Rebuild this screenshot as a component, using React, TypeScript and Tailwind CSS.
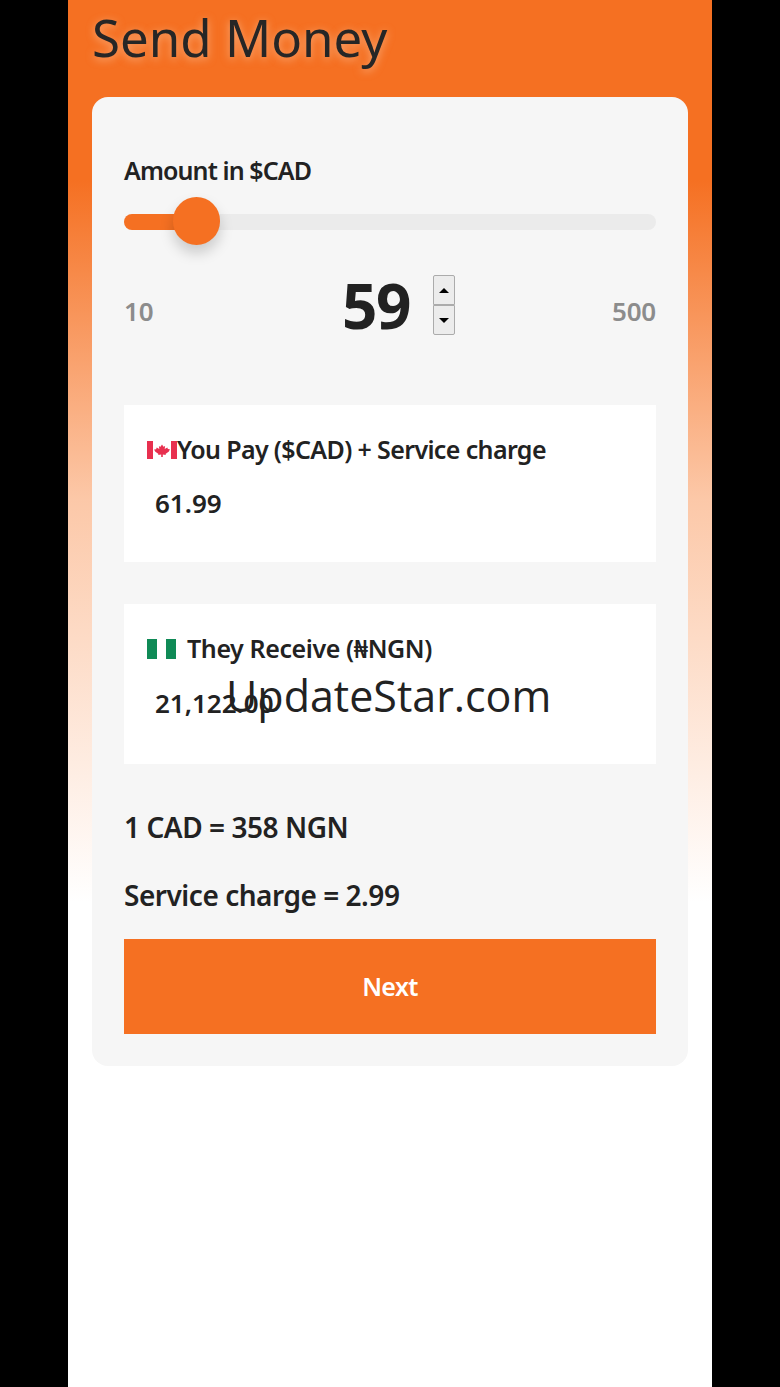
const display = "font-['Noto_Sans','Open_Sans',sans-serif]";

const CanadaFlag = () => (
  <svg width="30" height="18" viewBox="0 0 30 18" className="shrink-0">
    <rect x="0" y="0" width="6" height="18" fill="#e8304f" />
    <rect x="24" y="0" width="6" height="18" fill="#e8304f" />
    <path d="M15 3.5l1.5 2.2 1.6-.6-.4 2.8 2.6-1.4.6 1.6 2 .2-1 2.2-3.4 2.4.4 1-3.1-.4V16h-1.6v-2.4l-3.1.4.4-1-3.4-2.4-1-2.2 2-.2.6-1.6 2.6 1.4-.4-2.8 1.6.6z" fill="#e8304f" />
  </svg>
);

const NigeriaFlag = () => (
  <svg width="29" height="20" viewBox="0 0 29 20" className="shrink-0">
    <rect width="29" height="20" fill="#ffffff" />
    <rect width="10" height="20" fill="#0f8a56" />
    <rect x="19" width="10" height="20" fill="#0f8a56" />
  </svg>
);

const App = () => {
  return (
    <div className="flex h-[1387px] justify-center overflow-hidden bg-black">
      <div className="relative h-full w-[644px] bg-[linear-gradient(to_bottom,#f57022_0%,#f57022_13%,#fcc8a8_36%,#ffffff_65%)] px-6">
        <h1 className={`${display} h-[97px] pt-[1px] text-[51px] leading-[72px] font-normal text-[#262626] [text-shadow:0_2px_8px_rgba(255,225,200,0.55)]`}>
          Send Money
        </h1>

        <div className={`${display} h-[969px] rounded-[16px] bg-[#f6f6f6] px-8 pt-[56px] text-[#222222]`}>
          <label className="block text-[25px] leading-[34px] font-semibold tracking-[-0.9px]">Amount in $CAD</label>

          <div className="relative mt-[27px] h-4 rounded-full bg-[#ebebeb]">
            <div className="h-4 w-[72px] rounded-full bg-[#f57022]" />
            <div className="absolute top-[-17px] left-[49px] h-12 w-[47px] rounded-full bg-[#f57022] shadow-[0_8px_14px_rgba(0,0,0,0.18)]" />
          </div>

          <div className="relative mt-[44px] flex h-[62px] items-center justify-between text-[26px] font-semibold text-[#8c8c8c]">
            <span className="mt-[12px] tracking-[-0.2px]">10</span>
            <span className="mt-[12px] tracking-[-0.2px]">500</span>
            <div className="absolute top-[0px] left-[218px] flex items-center">
              <span className="text-[62px] leading-[62px] font-bold tracking-[-1.5px] text-[#222222]">59</span>
              <div className="ml-[23px] flex h-[60px] w-[22px] flex-col">
                <div className="flex flex-1 items-center justify-center rounded-t-[2px] border border-[#ababab] bg-[#ececec]">
                  <div className="h-0 w-0 border-x-[5px] border-b-[5px] border-x-transparent border-b-black" />
                </div>
                <div className="flex flex-1 items-center justify-center rounded-b-[2px] border border-[#ababab] bg-[#ececec]">
                  <div className="h-0 w-0 border-x-[5px] border-t-[5px] border-x-transparent border-t-black" />
                </div>
              </div>
            </div>
          </div>

          <div className="mt-[69px] h-[157px] bg-white pt-[27px] pl-[23px]">
            <div className="flex h-[36px] items-center text-[25px] font-semibold tracking-[-0.63px]">
              <CanadaFlag />
              <span>You Pay ($CAD) + Service charge</span>
            </div>
            <div className="mt-[17px] pl-2 text-[26px] leading-[36px] font-semibold">61.99</div>
          </div>

          <div className="mt-[42px] h-[160px] bg-white pt-[27px] pl-[23px]">
            <div className="flex h-[36px] items-center gap-[11px] text-[25px] font-semibold tracking-[-0.4px]">
              <NigeriaFlag />
              <span>They Receive (₦NGN)</span>
            </div>
            <div className="mt-[18px] pl-2 text-[26px] leading-[36px] font-semibold">21,122.00</div>
          </div>

          <p className="mt-[45px] text-[28px] leading-[36px] font-semibold tracking-[-0.45px]">1 CAD = 358 NGN</p>
          <p className="mt-[32px] text-[28px] leading-[36px] font-semibold tracking-[-0.47px]">Service charge = 2.99</p>

          <button className="mt-[26px] block h-[95px] w-full bg-[#f57022] text-[25px] font-semibold tracking-[-0.6px] text-white">
            Next
          </button>
        </div>

        <div className="absolute top-[667px] left-[158px] font-['Open_Sans',sans-serif] text-[43px] leading-[58px] text-[#222222]">
          UpdateStar.com
        </div>
      </div>
    </div>
  );
};

export default App;
